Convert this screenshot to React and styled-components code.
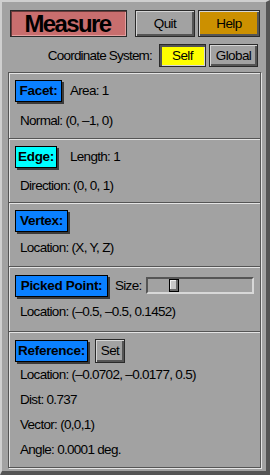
import styled, { createGlobalStyle } from "styled-components";

const GlobalStyle = createGlobalStyle`
  html, body {
    margin: 0;
    padding: 0;
    background: #a2a2a2;
  }
  body {
    font-family: "Liberation Sans", Arial, sans-serif;
  }
`;

function Measure() {
  return (
    <STYLEDWindow>
      <GlobalStyle />
      <STYLEDTopRow>
        <STYLEDTitle>Measure</STYLEDTitle>
        <STYLEDButton $w={60} $bg="#a2a2a2">Quit</STYLEDButton>
        <STYLEDButton $w={62} $bg="#cc9000">Help</STYLEDButton>
      </STYLEDTopRow>

      <STYLEDCoordRow>
        <STYLEDCoordLabel>Coordinate System:</STYLEDCoordLabel>
        <STYLEDToggle $w={47} $active>Self</STYLEDToggle>
        <STYLEDToggle $w={49}>Global</STYLEDToggle>
      </STYLEDCoordRow>

      <STYLEDPanel>
        <STYLEDSection $h={65}>
          <STYLEDRow>
            <STYLEDTag $w={47}>Facet:</STYLEDTag>
            <STYLEDValue $ml={8}>Area: 1</STYLEDValue>
          </STYLEDRow>
          <STYLEDInfo $mt={6}>Normal: (0, –1, 0)</STYLEDInfo>
        </STYLEDSection>

        <STYLEDSection $h={64}>
          <STYLEDRow>
            <STYLEDTag $w={42} $cyan>Edge:</STYLEDTag>
            <STYLEDValue $ml={13}>Length: 1</STYLEDValue>
          </STYLEDRow>
          <STYLEDInfo $mt={5}>Direction: (0, 0, 1)</STYLEDInfo>
        </STYLEDSection>

        <STYLEDSection $h={64}>
          <STYLEDRow>
            <STYLEDTag $w={53}>Vertex:</STYLEDTag>
          </STYLEDRow>
          <STYLEDInfo $mt={3}>Location: (X, Y, Z)</STYLEDInfo>
        </STYLEDSection>

        <STYLEDSection $h={65} $pt={7}>
          <STYLEDRow>
            <STYLEDTag $w={93}>Picked Point:</STYLEDTag>
            <STYLEDValue $ml={7}>Size:</STYLEDValue>
            <STYLEDSlider>
              <STYLEDKnob style={{ left: `${(22 / 108) * 100}%` }} />
            </STYLEDSlider>
          </STYLEDRow>
          <STYLEDInfo $mt={2}>Location: (–0.5, –0.5, 0.1452)</STYLEDInfo>
        </STYLEDSection>

        <STYLEDSection $pt={7} $grow>
          <STYLEDRow>
            <STYLEDTag $w={73}>Reference:</STYLEDTag>
            <STYLEDSet>Set</STYLEDSet>
          </STYLEDRow>
          <STYLEDInfo $mt={0}>Location: (–0.0702, –0.0177, 0.5)</STYLEDInfo>
          <STYLEDInfo>Dist: 0.737</STYLEDInfo>
          <STYLEDInfo>Vector: (0,0,1)</STYLEDInfo>
          <STYLEDInfo>Angle: 0.0001 deg.</STYLEDInfo>
        </STYLEDSection>
      </STYLEDPanel>
    </STYLEDWindow>
  );
}

export default function App() {
  return <Measure />;
}

const STYLEDWindow = styled.div`
  box-sizing: border-box;
  width: 270px;
  height: 475px;
  display: flex;
  flex-direction: column;
  background: #a2a2a2;
  border-top: 2px solid #cfcfcf;
  border-left: 2px solid #cfcfcf;
  border-right: 4px solid #555555;
  border-bottom: 4px solid #555555;
  padding: 8px 2px 3px 6px;
  color: #000;
`;

const STYLEDTopRow = styled.div`
  display: flex;
  align-items: stretch;
  height: 27px;
  padding-left: 2px;
`;

const STYLEDTitle = styled.div`
  box-sizing: border-box;
  width: 117px;
  margin-right: 8px;
  display: flex;
  align-items: center;
  justify-content: center;
  background: #c86e6e;
  border: 1px solid #2a2a2a;
  box-shadow: inset 1px 1px 0 #6a3a3a, inset -1px -1px 0 #e2a0a0;
  font-size: 24px;
  font-weight: bold;
  letter-spacing: -1.6px;
  padding-right: 2px;
`;

const STYLEDButton = styled.div`
  box-sizing: border-box;
  width: ${(p) => p.$w}px;
  margin-right: 3px;
  display: flex;
  align-items: center;
  justify-content: center;
  background: ${(p) => p.$bg};
  border: 1px solid #2a2a2a;
  box-shadow: inset 1px 1px 0 #d6d6d6, inset -2px -2px 0 #555555;
  font-size: 13.5px;
  letter-spacing: -0.6px;
`;

const STYLEDCoordRow = styled.div`
  display: flex;
  align-items: center;
  justify-content: flex-end;
  height: 23px;
  margin-top: 7px;
  padding-right: 6px;
  gap: 3px;
`;

const STYLEDCoordLabel = styled.span`
  font-size: 13.5px;
  letter-spacing: -0.8px;
  margin-right: 4px;
`;

const STYLEDToggle = styled.div`
  box-sizing: border-box;
  width: ${(p) => p.$w}px;
  height: 23px;
  display: flex;
  align-items: center;
  justify-content: center;
  background: ${(p) => (p.$active ? "#ffff00" : "#a2a2a2")};
  border: 1px solid #2a2a2a;
  box-shadow: ${(p) =>
    p.$active
      ? "inset 2px 2px 0 #555555, inset -1px -1px 0 #d6d6d6"
      : "inset 1px 1px 0 #d6d6d6, inset -2px -2px 0 #555555"};
  font-size: 13.5px;
  letter-spacing: -0.6px;
`;

const STYLEDPanel = styled.div`
  flex: 1;
  display: flex;
  flex-direction: column;
  margin-top: 5px;
  margin-right: 3px;
  border: 1px solid #555555;
  box-shadow: inset 1px 1px 0 #e4e4e4, 1px 1px 0 #e4e4e4;
`;

const STYLEDSection = styled.div`
  box-sizing: border-box;
  display: flex;
  flex-direction: column;
  ${(p) => (p.$grow ? "flex: 1;" : `height: ${p.$h}px;`)}
  padding: ${(p) => p.$pt || 6}px 0 0 6px;

  & + & {
    border-top: 1px solid #555555;
    box-shadow: inset 0 1px 0 #e4e4e4;
  }
`;

const STYLEDRow = styled.div`
  display: flex;
  align-items: center;
  height: 23px;
`;

const STYLEDTag = styled.div`
  box-sizing: border-box;
  width: ${(p) => p.$w}px;
  height: 22px;
  display: flex;
  align-items: center;
  justify-content: center;
  background: ${(p) => (p.$cyan ? "#00ffff" : "#0a80ff")};
  border: 1px solid #000;
  box-shadow: 2px 2px 0 #3a3a3a;
  font-size: 13.5px;
  font-weight: bold;
  letter-spacing: -0.3px;
`;

const STYLEDValue = styled.span`
  margin-left: ${(p) => p.$ml}px;
  font-size: 13.5px;
  letter-spacing: -0.7px;
`;

const STYLEDInfo = styled.div`
  height: 25px;
  line-height: 25px;
  margin-top: ${(p) => p.$mt || 0}px;
  padding-left: 5px;
  font-size: 13.5px;
  letter-spacing: -0.7px;
  white-space: nowrap;
`;

const STYLEDSlider = styled.div`
  box-sizing: border-box;
  position: relative;
  width: 108px;
  height: 17px;
  margin-left: 4px;
  background: #a2a2a2;
  border-top: 2px solid #555555;
  border-left: 2px solid #555555;
  border-bottom: 2px solid #d8d8d8;
  border-right: 2px solid #d8d8d8;
`;

const STYLEDKnob = styled.div`
  box-sizing: border-box;
  position: absolute;
  top: 0;
  width: 10px;
  height: 13px;
  background: #c8c8c8;
  border: 1px solid #000;
  box-shadow: inset -2px -2px 0 #6a6a6a, inset 1px 1px 0 #f0f0f0;
`;

const STYLEDSet = styled.div`
  box-sizing: border-box;
  width: 30px;
  height: 24px;
  margin-left: 7px;
  display: flex;
  align-items: center;
  justify-content: center;
  background: #a2a2a2;
  border: 1px solid #2a2a2a;
  box-shadow: inset 1px 1px 0 #d6d6d6, inset -2px -2px 0 #555555;
  font-size: 13.5px;
  letter-spacing: -0.6px;
`;
